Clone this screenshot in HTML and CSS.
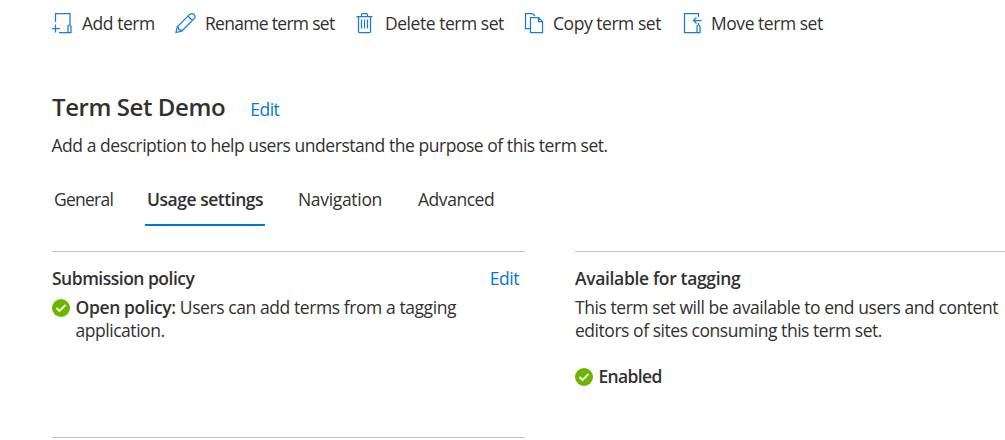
FILE: index.html
```html
<!DOCTYPE html>
<html lang="en">
<head>
<meta charset="utf-8">
<title>Term Set Demo</title>
<link rel="stylesheet" href="styles.css">
</head>
<body>
<nav class="toolbar">
  <button class="command add"><svg class="icon" viewBox="0 0 22 22"><path d="M4.5 10V1.5H19V13M1 16.5h8M4.5 12.5v8M8 20.5h12V14q-1.7-2.5-3 0v6"/></svg><span>Add term</span></button>
  <button class="command rename"><svg class="icon" viewBox="0 0 22 22"><path d="M2 20.5l1.300-5.700L15.700 2.400Q18 .7 20 2.500T20 6.800L7.700 19.200zM3.300 14.800l1.200.8.3 2 2 .3.9 1.300M14 4l4.400 4.500"/></svg><span>Rename term set</span></button>
  <button class="command delete"><svg class="icon" viewBox="0 0 22 22"><path d="M2.500 4.500h16M7.500 4.500v-2q0-1 1-1h4q1 0 1 1v2M4.500 4.500v15q0 1 1 1h10q1 0 1-1v-15M7.500 7.500v9M10.500 7.500v9M13.500 7.500v9"/></svg><span>Delete term set</span></button>
  <button class="command copy"><svg class="icon" viewBox="0 0 22 22"><path d="M7 16.500H2.500v-15h7L12 4M7.500 5.500h8l4 4v11h-12zM15.500 5.500v4h4"/></svg><span>Copy term set</span></button>
  <button class="command move"><svg class="icon" viewBox="0 0 22 22"><path d="M17.500 5V1.500h-14v19H19V14q-1.500-2.500-3 0v6M20.500 8.500h-8M15.500 5.500l-3 3 3 3M17.500 11v2"/></svg><span>Move term set</span></button>
</nav>
<main class="content">
  <header class="heading"><h1 class="title">Term Set Demo</h1><a class="link">Edit</a></header>
  <p class="description">Add a description to help users understand the purpose of this term set.</p>
  <div class="tabs">
    <span class="tab general">General</span>
    <span class="tab selected">Usage settings</span>
    <span class="tab navigation">Navigation</span>
    <span class="tab advanced">Advanced</span>
  </div>
  <div class="panels">
    <section class="panel">
      <div class="panel-head"><h2 class="panel-title submission">Submission policy</h2><a class="link">Edit</a></div>
      <div class="status">
        <svg class="check" viewBox="0 0 18 18"><circle cx="9" cy="9" r="9"/><path d="M4.500 9l3 3 6-6"/></svg>
        <div><div class="line policy"><b>Open policy:</b> Users can add terms from a tagging</div><div class="line application">application.</div></div>
      </div>
    </section>
    <section class="panel">
      <div class="panel-head"><h2 class="panel-title available">Available for tagging</h2></div>
      <div class="line users">This term set will be available to end users and content</div>
      <div class="line editors">editors of sites consuming this term set.</div>
      <div class="status enabled">
        <svg class="check" viewBox="0 0 18 18"><circle cx="9" cy="9" r="9"/><path d="M4.500 9l3 3 6-6"/></svg>
        <b>Enabled</b>
      </div>
    </section>
    <hr class="divider">
  </div>
</main>
</body>
</html>
```
FILE: styles.css
```css
* { box-sizing: border-box; }
body { margin: 0; height: 440px; overflow: hidden; background: #fff; color: #323130; font: 17.5px/23px "Open Sans", "Noto Sans", sans-serif; letter-spacing: -0.46px; white-space: nowrap; }
h1, h2, p { margin: 0; }
b { font-weight: 600; }
.toolbar { display: flex; padding: 12px 0 0 51px; height: 88px; }
.command { display: flex; flex: none; gap: 9px; height: 24px; padding: 0; border: 0; background: none; color: inherit; font: inherit; letter-spacing: inherit; text-align: left; }
.add { width: 123px; }
.rename { width: 180px; letter-spacing: -0.7px; }
.delete { width: 169px; }
.copy { width: 158px; gap: 8px; }
.move { gap: 8px; }
.icon { width: 22px; height: 22px; flex: none; fill: none; stroke: #1c7cd5; stroke-width: 1.25; }
.content { padding-left: 52px; }
.heading { display: flex; align-items: baseline; gap: 25px; height: 46px; }
.title { font-size: 24px; line-height: 38px; font-weight: 600; letter-spacing: -0.42px; }
.link { color: #0078d4; }
.description { height: 54px; margin-left: -0.5px; }
.tabs { display: flex; height: 63px; padding-left: 2px; }
.tab { height: 38px; }
.general { width: 91px; letter-spacing: -0.75px; }
.selected { width: 120px; padding-left: 2px; border-bottom: 2px solid #0078d4; font-weight: 600; letter-spacing: -0.47px; }
.navigation { width: 120px; margin-left: 33px; letter-spacing: -0.32px; }
.panels { display: grid; grid-template-columns: 473px 430px; grid-template-rows: 186px 1px; column-gap: 50px; }
.panel { border-top: 1px solid #c8c6c4; padding-top: 15px; }
.panel-head { display: flex; justify-content: space-between; height: 29px; padding-right: 6px; }
.panel-title { font-size: 17.5px; line-height: 23px; font-weight: 600; }
.submission { letter-spacing: -0.5px; }
.available { letter-spacing: -0.35px; }
.users { letter-spacing: -0.44px; }
.policy { letter-spacing: -0.42px; }
.policy b { letter-spacing: -0.37px; }
.status { display: flex; gap: 5.5px; }
.enabled { margin-top: 23px; letter-spacing: -0.65px; }
.check { width: 18px; height: 18px; margin-top: 3px; flex: none; fill: #6bb700; }
.check path { fill: none; stroke: #fff; stroke-width: 1.8; }
.divider { width: 100%; height: 1px; margin: 0; border: 0; background: #c8c6c4; }
```
